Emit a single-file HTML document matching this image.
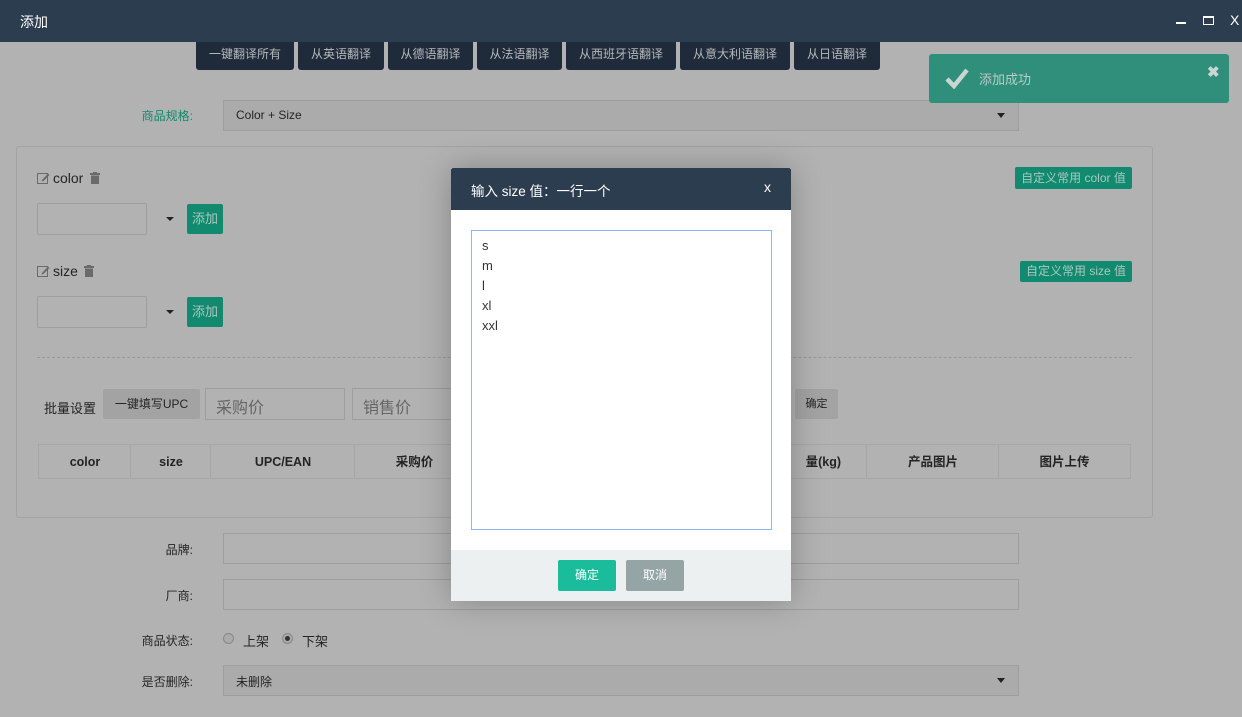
<!DOCTYPE html>
<html><head><meta charset="utf-8"><style>
*{box-sizing:border-box;margin:0;padding:0}
html{background:#b2b2b2}
body{width:1242px;height:717px;overflow:hidden;background:#b2b2b2;font-family:"Liberation Sans","Noto Sans CJK SC",sans-serif;font-size:12px;color:#242424;position:relative}
.a{position:absolute}
.hdr{left:0;top:0;width:1242px;height:42px;background:#2d3d50;color:#fff;font-size:14px;padding:12px 0 0 20px}
.tb{top:42px;height:28px;background:#1f2b3a;color:#b6b8bb;font-size:12px;text-align:center;line-height:24px;border-radius:0 0 3px 3px}
.inp{border:1px solid #9e9e9e;background:#ababab}
.lbl{font-size:12px;text-align:right;width:80px}
.gbtn{background:#128a6f;color:#a9c8bf;border-radius:2px;text-align:center}
.th{top:444px;height:35px;border:1px solid #a6a6a6;border-right:none;font-weight:bold;text-align:center;line-height:34px;font-size:12.5px}
</style></head><body>
<div class="a hdr">添加</div>
<div class="a" style="left:1176px;top:22px;width:10px;height:2px;background:#fff"></div>
<div class="a" style="left:1203px;top:16px;width:11px;height:9px;border:1.5px solid #fff;border-top-width:2.5px"></div>
<div class="a" style="left:1230px;top:12px;color:#fff;font-size:14px">X</div>
<div class="a tb" style="left:196px;width:98px">一键翻译所有</div>
<div class="a tb" style="left:298px;width:86px">从英语翻译</div>
<div class="a tb" style="left:388px;width:85px">从德语翻译</div>
<div class="a tb" style="left:477px;width:85px">从法语翻译</div>
<div class="a tb" style="left:566px;width:110px">从西班牙语翻译</div>
<div class="a tb" style="left:680px;width:110px">从意大利语翻译</div>
<div class="a tb" style="left:794px;width:86px">从日语翻译</div>

<div class="a lbl" style="left:113px;top:107px;color:#138a6e">商品规格:</div>
<div class="a inp" style="left:223px;top:100px;width:796px;height:31px;padding:7px 12px">Color + Size</div>
<div class="a" style="left:997px;top:113px;border:4px solid transparent;border-top:5px solid #222"></div>

<div class="a" style="left:16px;top:146px;width:1137px;height:372px;border:1px solid #a3a3a3;border-radius:3px"></div>

<svg class="a" style="left:37px;top:172px" width="13" height="12" viewBox="0 0 13 12"><rect x="0.5" y="1.5" width="10" height="10" fill="none" stroke="#6a6a6a"/><path d="M5 8 L11 1.5 L12.5 3 L6.5 9 L4.5 9.5Z" fill="#6a6a6a"/></svg>
<div class="a" style="left:53px;top:170px;font-size:14px">color</div>
<svg class="a" style="left:90px;top:172px" width="10" height="12" viewBox="0 0 10 12"><rect x="0" y="1" width="10" height="2" fill="#6a6a6a"/><rect x="3" y="0" width="4" height="2" fill="#6a6a6a"/><rect x="1" y="3.5" width="8" height="8.5" fill="#6a6a6a"/></svg>
<div class="a inp" style="left:37px;top:203px;width:110px;height:32px;background:#b2b2b2;border-radius:2px"></div>
<div class="a" style="left:166px;top:217px;border:4px solid transparent;border-top:4px solid #222"></div>
<div class="a gbtn" style="left:187px;top:204px;width:36px;height:30px;line-height:30px;font-size:13px">添加</div>
<div class="a gbtn" style="left:1015px;top:167px;width:117px;height:22px;line-height:22px">自定义常用 color 值</div>

<svg class="a" style="left:37px;top:265px" width="13" height="12" viewBox="0 0 13 12"><rect x="0.5" y="1.5" width="10" height="10" fill="none" stroke="#6a6a6a"/><path d="M5 8 L11 1.5 L12.5 3 L6.5 9 L4.5 9.5Z" fill="#6a6a6a"/></svg>
<div class="a" style="left:53px;top:263px;font-size:14px">size</div>
<svg class="a" style="left:84px;top:265px" width="10" height="12" viewBox="0 0 10 12"><rect x="0" y="1" width="10" height="2" fill="#6a6a6a"/><rect x="3" y="0" width="4" height="2" fill="#6a6a6a"/><rect x="1" y="3.5" width="8" height="8.5" fill="#6a6a6a"/></svg>
<div class="a inp" style="left:37px;top:296px;width:110px;height:32px;background:#b2b2b2;border-radius:2px"></div>
<div class="a" style="left:166px;top:310px;border:4px solid transparent;border-top:4px solid #222"></div>
<div class="a gbtn" style="left:187px;top:297px;width:36px;height:30px;line-height:30px;font-size:13px">添加</div>
<div class="a gbtn" style="left:1020px;top:261px;width:112px;height:21px;line-height:21px">自定义常用 size 值</div>

<div class="a" style="left:37px;top:357px;width:1095px;border-top:1px dashed #999"></div>
<div class="a" style="left:44px;top:398px;font-size:13px">批量设置</div>
<div class="a" style="left:103px;top:389px;width:97px;height:30px;background:#a3a3a3;border-radius:2px;text-align:center;line-height:30px">一键填写UPC</div>
<div class="a inp" style="left:205px;top:388px;width:140px;height:32px;background:#b2b2b2;color:#666;font-size:16px;padding:5px 10px">采购价</div>
<div class="a inp" style="left:352px;top:388px;width:140px;height:32px;background:#b2b2b2;color:#666;font-size:16px;padding:5px 10px">销售价</div>
<div class="a" style="left:795px;top:389px;width:43px;height:30px;background:#a3a3a3;border-radius:2px;text-align:center;line-height:30px;font-size:11px">确定</div>

<div class="a th" style="left:38px;width:93px">color</div>
<div class="a th" style="left:130px;width:81px">size</div>
<div class="a th" style="left:210px;width:145px">UPC/EAN</div>
<div class="a th" style="left:354px;width:120px">采购价</div>
<div class="a th" style="left:760px;width:107px;text-align:right;padding-right:26px">量(kg)</div>
<div class="a th" style="left:866px;width:133px">产品图片</div>
<div class="a th" style="left:998px;width:133px;border-right:1px solid #a6a6a6">图片上传</div>

<div class="a lbl" style="left:113px;top:541px">品牌:</div>
<div class="a inp" style="left:223px;top:533px;width:796px;height:31px;background:#b2b2b2"></div>
<div class="a lbl" style="left:113px;top:587px">厂商:</div>
<div class="a inp" style="left:223px;top:579px;width:796px;height:31px;background:#b2b2b2"></div>
<div class="a lbl" style="left:113px;top:632px">商品状态:</div>
<div class="a" style="left:223px;top:633px;width:11px;height:11px;border:1px solid #888;border-radius:50%;background:#aaa"></div>
<div class="a" style="left:243px;top:631px;font-size:13px">上架</div>
<div class="a" style="left:282px;top:633px;width:11px;height:11px;border:1px solid #888;border-radius:50%;background:#aaa"><div style="width:5px;height:5px;margin:2px;border-radius:50%;background:#333"></div></div>
<div class="a" style="left:302px;top:631px;font-size:13px">下架</div>
<div class="a lbl" style="left:113px;top:673px">是否删除:</div>
<div class="a inp" style="left:223px;top:665px;width:796px;height:31px;padding:7px 12px">未删除</div>
<div class="a" style="left:997px;top:678px;border:4px solid transparent;border-top:5px solid #222"></div>

<div class="a" style="left:929px;top:54px;width:300px;height:49px;background:#2f8f7b;border-radius:3px"></div>
<svg class="a" style="left:944px;top:66px" width="26" height="24" viewBox="0 0 26 24"><path d="M3 13 L10 20 L23 4" stroke="#c9d6d2" stroke-width="4.5" fill="none"/></svg>
<div class="a" style="left:979px;top:69px;font-size:13px;color:#b9ccc7">添加成功</div>
<div class="a" style="left:1207px;top:63px;font-size:15px;font-weight:bold;color:#c9d6d2">✖</div>

<div class="a" style="left:451px;top:168px;width:340px;height:433px;background:#fff;box-shadow:0 0 30px rgba(0,0,0,.25)"></div>
<div class="a" style="left:451px;top:168px;width:340px;height:42px;background:#2d3d50;color:#fff;font-size:13.5px;padding:12px 0 0 20px;border-radius:2px 2px 0 0">输入 size 值：一行一个</div>
<div class="a" style="left:764px;top:179px;color:#fff;font-size:14px">x</div>
<div class="a" style="left:471px;top:230px;width:301px;height:300px;border:1px solid #8fb4f5;padding:5px 10px;font-size:13px;line-height:20px;color:#333">s<br>m<br>l<br>xl<br>xxl</div>
<div class="a" style="left:451px;top:550px;width:340px;height:51px;background:#ecf0f1"></div>
<div class="a" style="left:558px;top:560px;width:58px;height:31px;background:#1abc9c;color:#fff;text-align:center;line-height:31px;border-radius:2px">确定</div>
<div class="a" style="left:626px;top:560px;width:58px;height:31px;background:#95a5a6;color:#fff;text-align:center;line-height:31px;border-radius:2px">取消</div>
</body></html>
